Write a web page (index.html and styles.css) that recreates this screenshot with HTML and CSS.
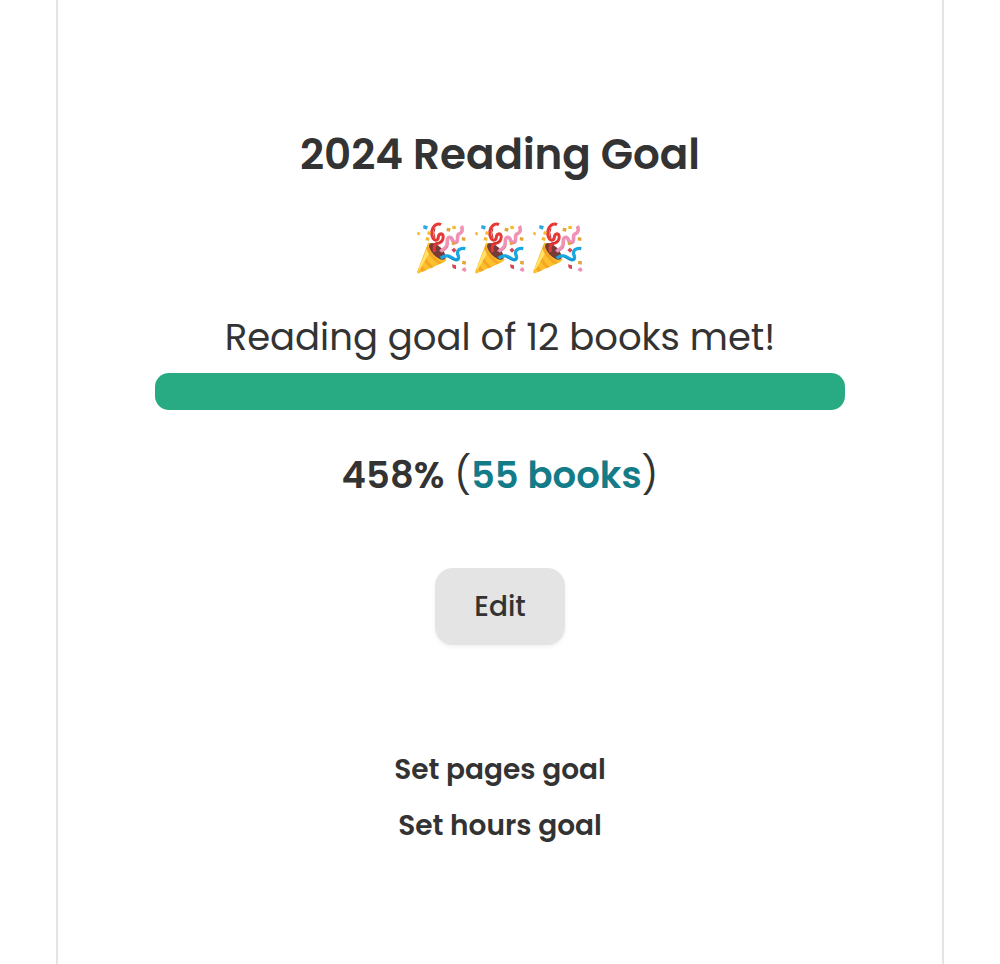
FILE: index.html
```html
<!DOCTYPE html>
<html lang="en">

<head>
    <meta charset="UTF-8">
    <meta name="viewport" content="width=device-width, initial-scale=1.0">
    <title>2024 Reading Goal</title>
    <link rel="stylesheet" href="styles.css">
</head>

<body>
    <svg width="0" height="0" class="sprite" aria-hidden="true">
        <symbol id="party" viewBox="20 21 156 156">
            <!-- cone -->
            <path fill="#fcc02e" d="M56 84 C64 78 110 119 111 133 C112 138 104 142 97 145 L29 175 Q22 177 24 169 Z" />
            <path fill="#f5a623" d="M55 89 C62 111 80 134 98 143 L88 148 C70 136 57 118 51 101 Z M45 118 C52 134 61 147 73 156 L64 160 C54 152 46 142 40 130 Z M34 144 C38 153 43 160 50 166 L40 170 L29 160 Z" />
            <path fill="#ffe36b" d="M52 103 L58 117 L31 164 L28 159 Z" />
            <ellipse cx="84" cy="109" rx="32" ry="15" transform="rotate(46 84 109)" fill="#773c38" />
            <!-- streamers -->
            <path fill="none" stroke="#e53935" stroke-width="9" d="M76 111 C73 99 73 90 82 86 C94 85 104 75 101 62 C99 53 88 56 87 66 C87 76 77 79 71 70 C63 56 68 34 82 28 Q88 25 95 29" />
            <path fill="none" stroke="#c62828" stroke-width="3" d="M73 86 Q87 84 97 78 M77 40 Q70 52 77 69" />
            <path fill="none" stroke="#ef93b6" stroke-width="11" d="M94 110 C100 101 109 103 113 90 C116 80 110 68 121 67 C132 66 126 84 139 82 C151 79 139 61 149 57 C158 54 162 44 156 33" />
            <path fill="none" stroke="#dc78a3" stroke-width="3" d="M102 108 Q113 104 116 94 M130 81 Q138 90 145 83" />
            <path fill="none" stroke="#19a8e2" stroke-width="10" d="M94 130 C109 117 120 123 134 132 C146 138 151 130 145 118 C142 106 152 98 168 101" />
            <path fill="none" stroke="#1685c3" stroke-width="3" d="M117 126 Q137 141 148 131" />
            <!-- confetti -->
            <path fill="#29a9df" d="M43 30 L56 34 L52 44 L41 40 Z" />
            <path fill="#f6b92d" d="M25 50 L32 53 L30 62 L23 58 Z M51 66 L61 68 L59 78 L48 75 Z M57 48 L65 52 L60 61 L53 56 Z M128 34 L138 32 L141 41 L130 43 Z" />
            <path fill="#e4a63a" d="M113 38 L124 40 L122 50 L111 48 Z M158 66 L169 68 L167 78 L157 76 Z M159 137 L170 139 L169 149 L158 147 Z M128 80 L137 83 L135 91 L127 89 Z" />
            <path fill="#d74452" d="M134 98 L142 106 L134 113 L126 105 Z M128 148 L140 151 L140 163 L130 159 Z" />
            <path fill="#ef93b6" d="M160 159 L167 157 L172 165 L167 171 L157 166 Z" />
        </symbol>
    </svg>

    <main class="container">
        <h1>2024 Reading Goal</h1>
        <div class="party" role="img" aria-label="Celebration">
            <svg class="party-icon"><use href="#party" /></svg>
            <svg class="party-icon"><use href="#party" /></svg>
            <svg class="party-icon"><use href="#party" /></svg>
        </div>
        <p class="goal-text">Reading goal of 12 books met!</p>
        <div class="progress" role="progressbar" aria-label="Reading goal" aria-valuenow="100" aria-valuemin="0" aria-valuemax="100">
            <div class="progress-bar" style="width: 100%"></div>
        </div>
        <p class="goal-total"><strong>458%</strong> (<a href="#">55 books</a>)</p>
        <button type="button" class="edit-btn">Edit</button>
        <nav class="goal-links">
            <a href="#">Set pages goal</a>
            <a href="#">Set hours goal</a>
        </nav>
    </main>
</body>

</html>
```
FILE: styles.css
```css
* {
    box-sizing: border-box;
}

body {
    font-family: Poppins, Inter, sans-serif;
    margin: 0;
    padding: 0 56px;
    color: #333;
    background-color: #fff;
}

.sprite {
    position: absolute;
}

.container {
    display: flex;
    flex-direction: column;
    align-items: center;
    min-height: 100vh;
    padding: 124px 97px 40px;
    border-left: 2px solid #e4e4e4;
    border-right: 2px solid #e4e4e4;
    text-align: center;
}

h1 {
    margin: 0;
    font-size: 42px;
    font-weight: 600;
    line-height: 62px;
}

.party {
    display: flex;
    gap: 6px;
    margin-top: 36px;
}

.party-icon {
    width: 52px;
    height: 52px;
}

.goal-text,
.goal-total {
    margin: 0;
    font-size: 37px;
    line-height: 56px;
}

.goal-text {
    margin-top: 35px;
}

.progress {
    width: 100%;
    height: 37px;
    margin-top: 8px;
    border-radius: 14px;
    background-color: #e4e4e4;
    overflow: hidden;
}

.progress-bar {
    height: 100%;
    background-color: #28aa83;
}

.goal-total {
    margin-top: 37px;
}

.goal-total strong,
.goal-total a {
    font-weight: 600;
}

.goal-total a {
    color: #147b88;
    text-decoration: none;
}

.edit-btn {
    margin-top: 65px;
    padding: 18px 39px 17px;
    border: 0;
    border-radius: 18px;
    background-color: #e4e4e4;
    box-shadow: 0 2px 4px rgba(0, 0, 0, 0.06);
    color: #333;
    font-family: inherit;
    font-size: 28px;
    font-weight: 500;
    line-height: 42px;
    cursor: pointer;
}

.goal-links {
    display: flex;
    flex-direction: column;
    gap: 14px;
    margin-top: 104px;
}

.goal-links a {
    color: #333;
    font-size: 28px;
    font-weight: 600;
    line-height: 42px;
    text-decoration: none;
}
```
